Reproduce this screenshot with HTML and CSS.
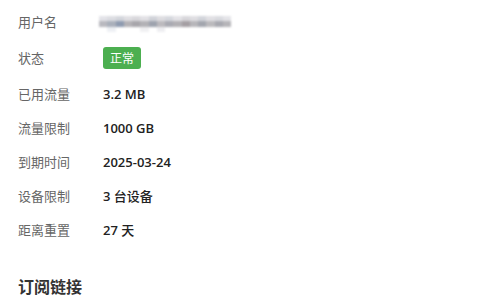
FILE: index.html
```html
<!DOCTYPE html>
<html lang="zh-CN">
<head>
    <meta charset="UTF-8">
    <meta name="viewport" content="width=device-width, initial-scale=1.0">
    <title>账户信息</title>
    <link rel="stylesheet" href="styles.css">
</head>
<body>
    <!-- Account info -->
    <div class="info-list">
        <div class="info-row">
            <div class="info-label">用户名</div>
            <div class="info-value">
                <!-- user name is pixelated in the screenshot -->
                <span class="masked">
                    <span class="masked-line light">
                        <i style="background:#e3e3e8"></i><i style="background:#dcdde2"></i><i style="background:#d4d6dc"></i><i style="background:#e0dfe3"></i><i style="background:#d9d8dc"></i><i style="background:#e2e1e5"></i><i style="background:#d1d3d9"></i><i style="background:#dedde1"></i><i style="background:#d6d8de"></i><i style="background:#e4e3e7"></i><i style="background:#d8d7db"></i><i style="background:#dfdee2"></i><i style="background:#d3d5db"></i><i style="background:#e1e0e4"></i><i style="background:#dadbe0"></i><i style="background:#e4e4e8"></i>
                    </span>
                    <span class="masked-line">
                        <i style="background:#b9b9bf"></i><i style="background:#aab0bb"></i><i style="background:#8f9bb0"></i><i style="background:#b4b2b6"></i><i style="background:#a8a6ab"></i><i style="background:#b3b2b6"></i><i style="background:#9ea3ae"></i><i style="background:#bcbabe"></i><i style="background:#a9aab2"></i><i style="background:#b2b0b4"></i><i style="background:#a59fa3"></i><i style="background:#b7b6ba"></i><i style="background:#a3a6ae"></i><i style="background:#bbbabd"></i><i style="background:#a8a9b0"></i><i style="background:#b6b5b9"></i>
                    </span>
                    <span class="masked-line light">
                        <i style="background:#ffffff"></i><i style="background:#eef0f4"></i><i style="background:#ffffff"></i><i style="background:#ffffff"></i><i style="background:#ffffff"></i><i style="background:#f0f0f2"></i><i style="background:#ffffff"></i><i style="background:#eeeef1"></i><i style="background:#ffffff"></i><i style="background:#ffffff"></i><i style="background:#ffffff"></i><i style="background:#ffffff"></i><i style="background:#ffffff"></i><i style="background:#ffffff"></i><i style="background:#ffffff"></i><i style="background:#ffffff"></i>
                    </span>
                </span>
            </div>
        </div>
        <div class="info-row badge-row">
            <div class="info-label">状态</div>
            <div class="info-value"><span class="status-badge">正常</span></div>
        </div>
        <div class="info-row">
            <div class="info-label">已用流量</div>
            <div class="info-value">3.2 MB</div>
        </div>
        <div class="info-row">
            <div class="info-label">流量限制</div>
            <div class="info-value">1000 GB</div>
        </div>
        <div class="info-row">
            <div class="info-label">到期时间</div>
            <div class="info-value">2025-03-24</div>
        </div>
        <div class="info-row">
            <div class="info-label">设备限制</div>
            <div class="info-value">3 <span class="unit">台设备</span></div>
        </div>
        <div class="info-row">
            <div class="info-label">距离重置</div>
            <div class="info-value">27 <span class="unit">天</span></div>
        </div>
    </div>

    <!-- Subscription -->
    <h2 class="section-title">订阅链接</h2>
</body>
</html>
```
FILE: styles.css
```css
/* Reset and base styles */
* {
    margin: 0;
    padding: 0;
    box-sizing: border-box;
}

body {
    background-color: #ffffff;
    color: #333333;
    font-family: "Open Sans", "Noto Sans CJK SC", sans-serif;
    padding: 5px 18px 0;
}

/* Info rows */
.info-list {
    display: flex;
    flex-direction: column;
}

.info-row {
    display: flex;
    align-items: center;
    height: 34px;
    line-height: 14px;
}

.badge-row {
    height: 38px;
}

.info-label {
    width: 85px;
    font-family: "Noto Sans CJK SC", sans-serif;
    font-size: 13px;
    color: #666666;
}

.info-value {
    font-size: 13px;
    font-weight: 600;
    color: #222222;
}

.info-value .unit {
    font-family: "Noto Sans CJK SC", sans-serif;
    font-weight: 500;
}

/* Pixelated user name */
.masked {
    display: flex;
    flex-direction: column;
    width: 132px;
    margin-left: -4px;
    filter: blur(0.9px);
    transform: translateY(2px);
}

.masked-line {
    display: flex;
    height: 6px;
}

.masked-line.light {
    height: 5px;
}

.masked i {
    flex: 1;
}

/* Status badge */
.status-badge {
    display: inline-block;
    height: 22px;
    padding: 0 7px;
    line-height: 22px;
    border-radius: 3px;
    background-color: #4caf50;
    color: #ffffff;
    font-family: "Noto Sans CJK SC", sans-serif;
    font-size: 12px;
    font-weight: 400;
}

/* Section title */
.section-title {
    margin-top: 28px;
    font-family: "Noto Sans CJK SC", sans-serif;
    font-size: 16px;
    font-weight: 700;
    line-height: 22px;
    color: #333333;
}
```
